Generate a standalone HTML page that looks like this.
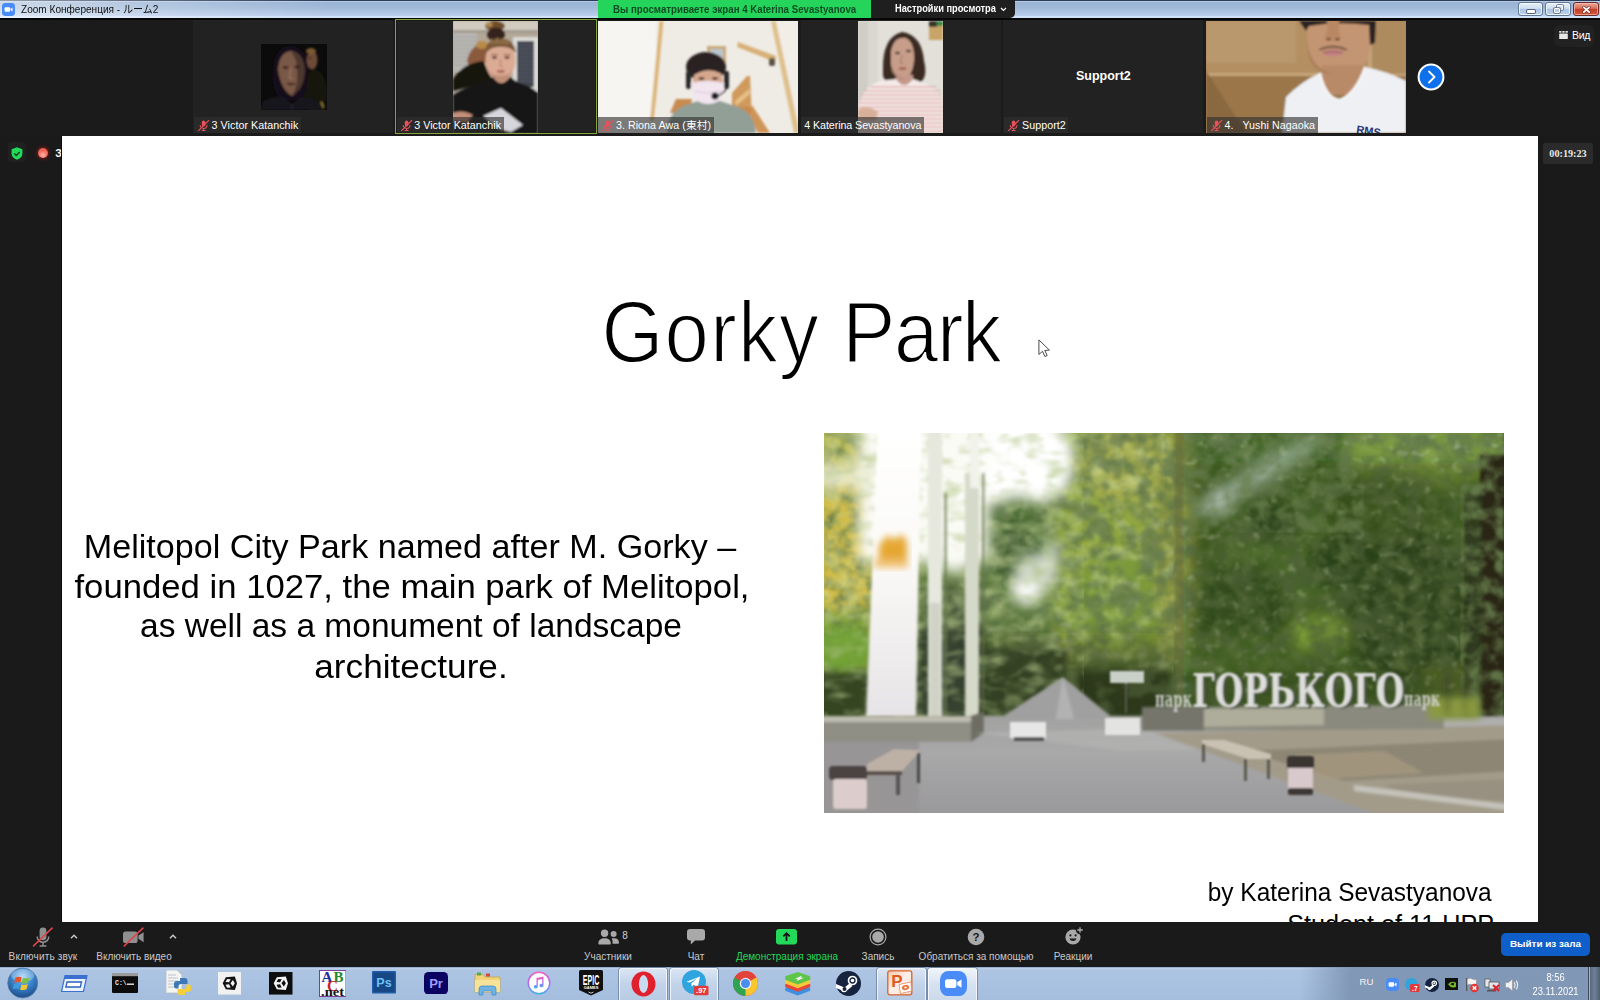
<!DOCTYPE html>
<html lang="ru">
<head>
<meta charset="utf-8">
<title>Zoom Конференция - ルーム2</title>
<style>
*{box-sizing:border-box;margin:0;padding:0}
html,body{width:1600px;height:1000px;overflow:hidden;background:#1a1a1a;font-family:"Liberation Sans","Noto Sans CJK JP",sans-serif;color:#fff}
.abs{position:absolute}
#titlebar{position:absolute;left:0;top:0;width:1600px;height:18px;background:linear-gradient(90deg,rgba(255,255,255,.5) 0,rgba(255,255,255,.28) 120px,rgba(255,255,255,0) 330px),linear-gradient(#2b3d59 0,#2b3d59 1px,#b7c9e3 1px,#b7c9e3 2px,#9ab4d4 2.500px,#a1bad9 8px,#aec4e2 12px,#b9ceec 15.500px,#d0e2f7 16px,#d0e2f7 17.600px,#0a0a0a 17.600px)}
#titlebar .ttl{position:absolute;left:21px;top:2px;font-size:10.6px;line-height:14px;color:#111;white-space:nowrap;transform:scaleX(.95);transform-origin:0 50%}
#strip{position:absolute;left:0;top:18px;width:1600px;height:118px;background:linear-gradient(#070707 0,#070707 1.600px,#1b1b1b 2px)}
.tile{position:absolute;top:2px;width:200px;height:113px;background:#222;overflow:hidden}
.lbl{position:absolute;left:1px;bottom:0;height:16px;background:rgba(46,46,46,.62);color:#fff;font-size:10.7px;line-height:16px;padding:0 2.600px 0 17.600px;letter-spacing:.05px;white-space:nowrap}
.lbl.nomic{padding-left:3.5px}
#slide{position:absolute;left:62px;top:136px;width:1476px;height:786px;background:#fff;overflow:hidden;color:#000}
#zbar{position:absolute;left:0;top:922px;width:1600px;height:45px;background:#1a1a1a}
.zl{position:absolute;top:27.700px;font-size:10.4px;line-height:13px;color:#c9c9c9;white-space:nowrap;transform:translateX(-50%) scaleX(.962)}
#taskbar{position:absolute;left:0;top:967px;width:1600px;height:33px;background:linear-gradient(#6f8db4 0,#c0d2ea 1px,#adc5e3 3px,#a9c1e0 60%,#a5bedd 100%)}

.t-title{position:absolute;left:349px;top:146px;width:780px;text-align:center;font-family:"Liberation Sans",sans-serif;font-size:86.200px;line-height:100px;white-space:nowrap;color:#000;-webkit-text-stroke:1.850px #fff;transform:scaleX(.925);transform-origin:50% 50%}
.bl{position:absolute;left:-52px;width:800px;text-align:center;font-size:32.5px;line-height:40px;white-space:nowrap;color:#000;transform-origin:50% 50%;transform:scaleX(1.05)}
.fl{position:absolute;right:46px;text-align:right;font-size:25.2px;line-height:34px;white-space:nowrap;color:#000;transform-origin:100% 50%;transform:scaleX(.97)}

.tile.act{border:1px solid #86a63c;box-shadow:inset 0 0 0 1px #1a1a1a;background:#222}
.lbl .mic{position:absolute;left:3px;top:1.5px}

#taskbar{overflow:hidden}
#taskbar::before{content:"";position:absolute;left:1300px;top:0;width:300px;height:33px;background:linear-gradient(90deg,rgba(124,147,178,0) 0,rgba(124,147,178,.9) 50px,rgba(126,149,180,.95) 100%)}
.tbtn{position:absolute;top:.600px;height:34px;border:1px solid rgba(255,255,255,.75);border-radius:3px;background:linear-gradient(rgba(255,255,255,.55),rgba(255,255,255,.3) 45%,rgba(255,255,255,.2));box-shadow:0 0 0 1px rgba(70,90,120,.5)}
.tbtn.on{background:linear-gradient(rgba(255,255,255,.8),rgba(255,255,255,.55) 45%,rgba(255,255,255,.42))}

.wb{position:absolute;top:2.200px;height:13.400px;border:1px solid #5f7696;border-radius:3px;background:linear-gradient(#e6eef9 0,#cfdff2 45%,#aac4e4 50%,#b9d0ea 100%);box-shadow:inset 0 0 0 1px rgba(255,255,255,.75)}
.wb i{position:absolute;display:block}
.wb.cl{border-color:#6a2a28;background:linear-gradient(#eaa898 0,#d9705c 45%,#c43c26 50%,#d05a3c 100%);box-shadow:inset 0 0 0 1px rgba(255,200,190,.6)}
</style>
</head>
<body>
<div id="titlebar"><span class="ttl">Zoom Конференция - ルーム2</span>
<svg class="abs" style="left:2px;top:3px" width="13" height="13" viewBox="0 0 13 13"><rect width="13" height="13" rx="3.400" fill="#4a8cf7"/><rect x="2.600" y="4.300" width="5.400" height="4.400" rx="1" fill="#fff"/><path d="M8.400 5.900l2.100-1.400v4l-2.100-1.400z" fill="#fff"/></svg>
<div class="wb" style="left:1517.500px;width:25.500px"><i style="left:8.500px;top:6.500px;width:8px;height:3px;border-radius:1px;background:#fff;box-shadow:0 0 0 1px #56627a"></i></div>
<div class="wb" style="left:1545.300px;width:25.300px"><i style="left:10.500px;top:2.200px;width:6px;height:5px;border:1.400px solid #fff;border-radius:1px;box-shadow:0 0 0 .8px #56627a"></i><i style="left:7.800px;top:4.600px;width:6px;height:5px;border:1.400px solid #fff;border-radius:1px;background:#b9cde6;box-shadow:0 0 0 .8px #56627a"></i></div>
<div class="wb cl" style="left:1572.500px;width:26px"><svg class="abs" style="left:8.300px;top:2.400px" width="9" height="8" viewBox="0 0 9 8"><path d="M1.800 1.400l5.400 4.800M7.200 1.400l-5.400 4.800" stroke="#7a3a30" stroke-width="3" stroke-linecap="round"/><path d="M1.800 1.400l5.400 4.800M7.200 1.400l-5.400 4.800" stroke="#fff" stroke-width="1.700" stroke-linecap="round"/></svg></div>
<div class="abs" style="left:598.300px;top:0;width:272.700px;height:18px;background:#25d45b"><span class="abs" style="left:15px;top:2.500px;font-size:10.300px;font-weight:bold;line-height:14px;color:#0d4d24;white-space:nowrap;transform-origin:0 50%;transform:scaleX(.94)" id="gb">Вы просматриваете экран 4 Katerina Sevastyanova</span></div>
<div class="abs" style="left:871px;top:0;width:144px;height:18px;background:#1f1f1f;border-radius:0 0 5px 0"><span class="abs" style="left:24px;top:2px;font-size:10.300px;font-weight:bold;line-height:14px;color:#fff;white-space:nowrap;transform-origin:0 50%;transform:scaleX(.9)" id="np">Настройки просмотра</span><svg class="abs" style="left:129px;top:7px" width="7" height="5" viewBox="0 0 7 5"><path d="M1 1l2.500 2.500l2.500-2.500" fill="none" stroke="#fff" stroke-width="1.200"/></svg></div>
</div>
<div id="strip">
<svg width="0" height="0" style="position:absolute"><defs>
<filter id="tb1" x="-5%" y="-5%" width="110%" height="110%"><feGaussianBlur stdDeviation="0.9"/></filter>
<filter id="tb2" x="-5%" y="-5%" width="110%" height="110%"><feGaussianBlur stdDeviation="2"/></filter>
<symbol id="mute" viewBox="0 0 14 14"><rect x="5.200" y="1.600" width="3.800" height="6.600" rx="1.900" fill="#e8525a"/><path d="M3.400 6.500a3.700 3.700 0 0 0 7.400 0M7.100 10.200v2M5 12.400h4.200" fill="none" stroke="#e8525a" stroke-width="1.100"/><path d="M1.400 12.800L13 1.200" stroke="#e8525a" stroke-width="1.300"/></symbol>
</defs></svg>

<div class="tile" style="left:193px">
<svg class="abs" style="left:67.5px;top:24px" width="66" height="66" viewBox="0 0 66 66"><rect width="66" height="66" fill="#0b0b0b"/><g filter="url(#tb1)"><ellipse cx="51" cy="16" rx="5.500" ry="9.500" fill="#6e4c38"/><ellipse cx="50" cy="7" rx="5" ry="3" fill="#7a5a30"/><ellipse cx="49.500" cy="14" rx="1.300" ry=".8" fill="#2a1a14"/><ellipse cx="54" cy="48" rx="12" ry="22" fill="#15140f"/><path d="M12 30 Q12 2 30 2 Q47 3 47 30 Q48 46 40 56 L20 56 Q11 46 12 30z" fill="#14111a"/><path d="M17 26 Q18 8 30 7 Q43 9 43.500 27 Q43 44 31 52 Q20 46 17 26z" fill="#7a5846"/><path d="M30 8 Q43 9 43.500 27 Q43 44 31 52 Q38 40 36 26 Q36 14 30 8z" fill="#4e382e"/><ellipse cx="24.500" cy="23.500" rx="3" ry="1.300" fill="#2a1a16"/><ellipse cx="36" cy="23" rx="2.800" ry="1.300" fill="#20140f"/><path d="M30 24 L28.500 34 L32 35" stroke="#9a7260" stroke-width="1.400" fill="none"/><ellipse cx="30" cy="40" rx="4.500" ry="1.200" fill="#4a2e28"/><path d="M0 66 L2 58 Q14 50 24 54 L31 60 L40 53 Q56 52 62 66z" fill="#17171b"/><path d="M31 60v6" stroke="#33333a" stroke-width="1"/><path d="M60 58l3 6" stroke="#b89a3a" stroke-width="1.200"/></g></svg>
<div class="lbl"><svg class="mic" width="13" height="13"><use href="#mute"/></svg>3 Victor Katanchik</div>
</div>

<div class="tile act" style="left:395px;width:202px;top:1px;height:115px">
<svg class="abs" style="left:57px;top:1px" width="85" height="113" viewBox="0 0 85 113"><rect width="85" height="113" fill="#b3a898"/><g filter="url(#tb1)">
<rect width="85" height="9" fill="#d2ccc0"/><rect y="9" width="85" height="3" fill="#a39a8c"/>
<rect x="0" y="12" width="24" height="38" fill="#b9b8b5"/><path d="M0 16h24M0 20h24M0 24h24M0 28h24M0 32h24M0 36h24M0 40h24M0 44h24" stroke="#9a9996" stroke-width=".8"/>
<rect x="60" y="16" width="25" height="54" fill="#dcdbd8"/><rect x="64" y="20" width="17" height="46" fill="#41454f"/><path d="M64 24h17M64 28h17M64 32h17M64 36h17M64 40h17M64 44h17M64 48h17M64 52h17M64 56h17M64 60h17" stroke="#6a6e78" stroke-width=".7"/>
<ellipse cx="42" cy="5" rx="10" ry="5" fill="#6f4e2c"/><ellipse cx="36" cy="3.500" rx="3.500" ry="2.500" fill="#b08a50"/><ellipse cx="43" cy="13.500" rx="9" ry="7" fill="#35241c"/>
<path d="M14 40 Q18 22 34 22 L38 34 Q30 48 18 50z" fill="#8b5a3c"/><ellipse cx="29" cy="24" rx="6" ry="4" fill="#b88a48"/>
<path d="M0 70 L0 58 Q10 42 30 40 L40 60z" fill="#15120f"/>
<ellipse cx="47.5" cy="39" rx="15" ry="21" fill="#dcab94"/>
<path d="M32 33 Q32 18 47 17.500 Q62 18 63 32 Q57 25 47 26 Q38 25 32 33z" fill="#7a5a3a"/><path d="M36 22l3-5l2 4l3-5l3 5l3-4l2 4l3-3l1 5z" fill="#8f6e48"/>
<rect x="40" y="54" width="16" height="12" fill="#c99780"/><ellipse cx="41.500" cy="36.500" rx="2.700" ry="1.200" fill="#4a3228"/><ellipse cx="54" cy="36.500" rx="2.700" ry="1.200" fill="#4a3228"/><path d="M38 33.500h7M50.500 33.500h7" stroke="#7a5a40" stroke-width="1.200"/><path d="M47.500 38v7l2.500 .800" stroke="#b88672" stroke-width="1.300" fill="none"/><ellipse cx="47.800" cy="50.500" rx="4.200" ry="1.400" fill="#a8625a"/><path d="M36 48 Q40 60 47.500 60 Q55 60 59 48 Q54 56 47.500 56.500 Q41 56 36 48z" fill="#b98872" opacity=".7"/>
<path d="M0 113 L0 74 Q12 66 28 62 L40 56 Q48 68 57 56 L66 62 Q80 66 85 72 L85 113z" fill="#151515"/>
<path d="M0 92 Q10 88 20 94 L14 101 L0 100z" fill="#c48f78"/>
<polygon points="30,95 48,87 70,104 58,111 46,108" fill="#d6d6dc"/>
</g></svg>
<div class="lbl" style="left:.600px;bottom:0"><svg class="mic" width="13" height="13"><use href="#mute"/></svg>3 Victor Katanchik</div>
</div>

<div class="tile" style="left:598.3px;width:199.7px;top:3px;height:112px">
<svg class="abs" style="left:0;top:0" width="200" height="112" viewBox="0 0 200 112"><rect width="200" height="112" fill="#efece6"/><g filter="url(#tb1)">
<rect width="58" height="112" fill="#f6f5f2"/>
<polygon points="61.500,0 65.500,0 56,100 52,100" fill="#dcb578"/>
<polygon points="173,0 178,0 200,104 200,112 196,112" fill="#dfc08c"/>
<polygon points="178,0 200,0 200,100" fill="#f1eee8"/>
<rect x="109" y="25" width="19" height="24" fill="#c9aa7c"/><rect x="112" y="28" width="13" height="21" fill="#bcc4cc"/>
<polygon points="140,21 178,35 177,41 139,26" fill="#d8b078"/><rect x="171" y="37" width="6" height="8" rx="2" fill="#5a5244"/>
<polygon points="134,100 134,72 149,55 152,55 154,100" fill="#cf9a5c"/><polygon points="137,80 151,68 152,73 138,85" fill="#e6c088"/><polygon points="134,86 154,86 154,100 134,100" fill="#c98a4c"/>
<polygon points="154,84 172,112 160,112 152,96" fill="#cf9458"/>
<polygon points="72,92 78,78 94,78 92,92" fill="#c98a50"/>
<path d="M69 112 Q70 90 88 84 L100 80 L122 80 L140 86 Q156 92 158 112z" fill="#929f97"/>
<ellipse cx="108" cy="46" rx="20" ry="15" fill="#2a2423"/>
<ellipse cx="110" cy="60" rx="15" ry="14" fill="#d6a78e"/>
<path d="M92 52 Q94 40 110 42 Q126 42 128 52 L122 52 Q110 46 98 53z" fill="#2a2423"/>
<rect x="88" y="50" width="5" height="18" rx="2" fill="#2b2b2b"/><rect x="126" y="50" width="5" height="18" rx="2" fill="#2b2b2b"/>
<ellipse cx="103.500" cy="57.500" rx="3" ry="1.200" fill="#3a2824"/><ellipse cx="117" cy="57.500" rx="3" ry="1.200" fill="#3a2824"/><path d="M93 62 Q110 58 126 62 L124 78 Q110 88 96 78z" fill="#f1e5ee"/><path d="M97 70 Q110 74 123 70" stroke="#d9c8d6" stroke-width="1" fill="none"/>
<path d="M129 64 Q128 72 119 75" stroke="#2b2b2b" stroke-width="1.5" fill="none"/><circle cx="117" cy="75" r="3.6" fill="#1d1d1d"/>
</g></svg>
<div class="lbl" style="left:0"><svg class="mic" width="13" height="13"><use href="#mute"/></svg>3. Riona Awa (東村)</div>
</div>

<div class="tile" style="left:800.8px">
<svg class="abs" style="left:57.4px;top:1px" width="84.5" height="112" viewBox="0 0 84.5 112"><rect width="85" height="112" fill="#e2e0d9"/><g filter="url(#tb1)">
<rect width="14" height="112" fill="#cfcdc6"/><rect x="10" width="10" height="112" fill="#d9d7d0"/>
<rect x="71" y="0" width="14" height="19" fill="#c8a468"/><rect x="71" y="0" width="8" height="6" fill="#34342a"/><rect x="79" y="0" width="6" height="5" fill="#3e8a4a"/>
<path d="M25 50 Q24 16 44 11 Q64 14 66 40 Q70 56 62 62 L30 62 Q24 58 25 50z" fill="#3a2a23"/>
<path d="M33 30 Q36 15 48 17 Q57 22 56 40 Q54 56 46 59 Q36 58 33 44z" fill="#c79e8a"/>
<rect x="38" y="54" width="17" height="12" fill="#c4998a"/><ellipse cx="39.500" cy="32" rx="2.600" ry="1.300" fill="#4a3028"/><ellipse cx="50.500" cy="30" rx="2.600" ry="1.300" fill="#4a3028"/><path d="M44 34 l-1.500 8 l3.500 .5" stroke="#a87c6a" stroke-width="1.200" fill="none"/><ellipse cx="44.500" cy="47.500" rx="4" ry="1.500" fill="#a0605a"/><path d="M34 46 Q40 58 47 58 Q40 60 33 50z" fill="#a8806e" opacity=".6"/>
<path d="M0 112 L0 86 Q4 66 22 60 L38 58 Q46 70 55 58 L66 62 Q82 68 85 82 L85 112z" fill="#f4ebe8"/>
<g stroke="#d58c8c" stroke-width="1.200" opacity=".95"><path d="M12 66h66M6 70h76M3 74h80M2 78h82M1 82h83M0 86h85M0 90h85M0 94h85M0 98h85M0 102h85M0 106h85M0 110h85"/></g>
<path d="M0 88 Q10 84 20 90 L18 100 L0 100z" fill="#d8b09a"/>
</g></svg>
<div class="lbl nomic" style="left:0;letter-spacing:-.08px">4 Katerina Sevastyanova</div>
</div>

<div class="tile" style="left:1003.4px">
<div class="abs" style="left:0;top:48px;width:200px;text-align:center;font-weight:bold;font-size:12.5px;line-height:16px;color:#fff">Support2</div>
<div class="lbl"><svg class="mic" width="13" height="13"><use href="#mute"/></svg>Support2</div>
</div>

<div class="tile" style="left:1206px;top:3px;height:112px">
<svg class="abs" style="left:0;top:0" width="200" height="112" viewBox="0 0 200 112"><rect width="200" height="112" fill="#a8855a"/><g filter="url(#tb1)">
<rect width="200" height="53" fill="#b38f62"/><rect width="90" height="42" fill="#bc9a70" opacity=".8"/>
<rect y="52" width="200" height="3" fill="#c6a679"/><rect y="55" width="200" height="57" fill="#9a764a"/>
<polygon points="0,50 40,112 0,112" fill="#8a6840"/>
<rect x="162" y="0" width="4" height="60" fill="#c4a47a"/><rect x="166" y="0" width="34" height="53" fill="#ae8a5e"/>
<path d="M99 0 L164 0 L164 30 Q160 50 140 53 L128 53 Q108 50 103 28z" fill="#c49572"/>
<rect x="116" y="44" width="44" height="30" fill="#b98a68"/>
<path d="M93 0 L170 0 L169 22 L164 24 L163 4 Q130 0 103 5 L100 10z" fill="#2a2120"/>
<path d="M121 0 Q122 12 118.500 17.500 Q127 22 135.500 17.500 Q132 12 133 0z" fill="#b98864"/><ellipse cx="122.500" cy="18.300" rx="2.200" ry="1.200" fill="#6a4030"/><ellipse cx="131.500" cy="18.300" rx="2.200" ry="1.200" fill="#6a4030"/><path d="M114 27 Q127 21.500 140 27 L139 29.500 Q127 25 115 29.500z" fill="#8a6450" opacity=".8"/><ellipse cx="127" cy="32" rx="10" ry="3.600" fill="#c28484"/><path d="M117 31.500 Q127 30 137 31.500" stroke="#8a4a4a" stroke-width=".9" fill="none"/><path d="M101 22 Q106 48 128 53 Q110 54 103 38z" fill="#a87a58" opacity=".55"/><path d="M113 29 Q127 22 141 29" stroke="#7a5848" stroke-width="1.5" fill="none"/>
<path d="M76 112 L80 76 Q96 60 114 52 Q120 78 134 79 Q150 72 159 46 Q180 50 200 60 L200 112z" fill="#eef0f4"/>
<path d="M114 52 Q120 78 134 79 Q150 72 159 46" stroke="#fafafa" stroke-width="2" fill="none"/>
</g>
<text x="150" y="112" font-family="'Liberation Sans',sans-serif" font-weight="bold" font-size="11" fill="#2a3478" transform="rotate(8 150 112)">RMS</text>
</svg>
<div class="lbl"><svg class="mic" width="13" height="13"><use href="#mute"/></svg>4.&nbsp;&nbsp; Yushi Nagaoka</div>
</div>

<svg class="abs" style="left:1415.6px;top:43.6px" width="30" height="30" viewBox="0 0 30 30"><circle cx="15" cy="15" r="13.4" fill="#fff"/><circle cx="15" cy="15" r="11.4" fill="#0e71eb"/><path d="M13 9.5L18.5 15L13 20.5" fill="none" stroke="#fff" stroke-width="1.8" stroke-linecap="round" stroke-linejoin="round"/></svg>

<div class="abs" style="left:1554px;top:7px;width:40px;height:22px;border-radius:6px;background:#222"></div>
<svg class="abs" style="left:1558.800px;top:12.600px" width="9" height="8.600" viewBox="0 0 10 10" fill="#e8e8e8"><rect x="0" y="0" width="2.6" height="2"/><rect x="3.7" y="0" width="2.6" height="2"/><rect x="7.4" y="0" width="2.6" height="2"/><rect x="0" y="3" width="10" height="6.5" rx=".8"/></svg>
<div class="abs" style="left:1572px;top:10px;font-size:10.5px;line-height:14px;color:#fff;letter-spacing:-.3px">Вид</div>
</div>

<div class="abs" style="left:7.500px;top:142px;width:18.500px;height:20px;border-radius:4px;background:#202020"></div>
<svg class="abs" style="left:11px;top:146.500px" width="12" height="13" viewBox="0 0 12 13"><path d="M6 .3l5.400 1.900v4.300c0 3.200-2.400 5.300-5.400 6.200c-3-.900-5.400-3-5.400-6.200v-4.300z" fill="#23d959"/><path d="M3.400 6.600l1.900 1.900l3.400-3.600" fill="none" stroke="#173d22" stroke-width="1.400"/></svg>
<div class="abs" style="left:38.200px;top:148px;width:9.800px;height:9.800px;border-radius:50%;background:radial-gradient(circle at 50% 70%,#ffb3a6 0,#f0665a 55%,#d94438 100%);box-shadow:0 0 3px 1.500px rgba(150,30,20,.55)"></div>
<div class="abs" style="left:55.300px;top:146px;font-size:10.500px;font-weight:bold;line-height:14px;color:#fff;white-space:nowrap">Запись</div>
<div class="abs" style="left:61px;top:136px;width:1px;height:786px;background:#0a0a0a"></div>
<div id="slide">
<div class="t-title" id="ttl"><span style="letter-spacing:1.300px">Gorky</span> <span style="letter-spacing:-1.500px">Park</span></div>
<div class="bl" id="b1" style="top:391px">Melitopol City Park named after M. Gorky –</div>
<div class="bl" id="b2" style="top:431px;left:-50px;transform:scaleX(1.0675)">founded in 1027, the main park of Melitopol,</div>
<div class="bl" id="b3" style="top:470px;left:-51px;transform:scaleX(1.031)">as well as a monument of landscape</div>
<div class="bl" id="b4" style="top:510.5px;left:-50.7px;transform:scaleX(1.081)">architecture.</div>
<div class="fl" id="f1" style="top:739px">by Katerina Sevastyanova</div>
<div class="fl" id="f2" style="top:771px;right:44px;transform:scaleX(1.0)">Student of 11 UPP</div>
<svg class="abs" style="left:975.700px;top:202.700px" width="13" height="19" viewBox="0 0 13 19"><path d="M.9.900v14.600l3.600-3.200l2.400 5.200l2.300-1l-2.400-5l4.600-.4z" fill="#fff" stroke="#4a4a4e" stroke-width="1" stroke-linejoin="round"/></svg>
<!--PHOTO-START--><svg class="photo" width="680" height="380" viewBox="0 0 680 380" style="position:absolute;left:762px;top:297px">
<defs>
<filter id="pb8" x="-10%" y="-10%" width="120%" height="120%"><feGaussianBlur stdDeviation="7"/></filter>
<filter id="pb4" x="-10%" y="-10%" width="120%" height="120%"><feGaussianBlur stdDeviation="3.5"/></filter>
<filter id="pb2" x="-10%" y="-10%" width="120%" height="120%"><feGaussianBlur stdDeviation="1.5"/></filter>
<filter id="pb1" x="-10%" y="-10%" width="120%" height="120%"><feGaussianBlur stdDeviation="0.8"/></filter>
<filter id="leafd" x="0" y="0" width="100%" height="100%"><feTurbulence type="fractalNoise" baseFrequency="0.07 0.08" numOctaves="3" seed="7"/><feColorMatrix type="matrix" values="0 0 0 0 0.13  0 0 0 0 0.2  0 0 0 0 0.07  2.2 1.6 0 0 -1.55"/><feGaussianBlur stdDeviation="1.1"/></filter>
<filter id="leafl" x="0" y="0" width="100%" height="100%"><feTurbulence type="fractalNoise" baseFrequency="0.06 0.07" numOctaves="3" seed="23"/><feColorMatrix type="matrix" values="0 0 0 0 0.76  0 0 0 0 0.84  0 0 0 0 0.42  0 1.9 1.7 0 -1.6"/><feGaussianBlur stdDeviation="1.2"/></filter>
<filter id="leafg" x="0" y="0" width="100%" height="100%"><feTurbulence type="fractalNoise" baseFrequency="0.05 0.09" numOctaves="2" seed="5"/><feColorMatrix type="matrix" values="0 0 0 0 0.45  0 0 0 0 0.56  0 0 0 0 0.25  1.8 1.8 0 0 -1.7"/><feGaussianBlur stdDeviation="1.3"/></filter>
<filter id="leafD2" x="0" y="0" width="100%" height="100%"><feTurbulence type="fractalNoise" baseFrequency="0.035 0.045" numOctaves="3" seed="41"/><feColorMatrix type="matrix" values="0 0 0 0 0.11  0 0 0 0 0.17  0 0 0 0 0.07  7 3 0 0 -5.15"/><feGaussianBlur stdDeviation="1.4"/></filter>
<filter id="leafH" x="0" y="0" width="100%" height="100%"><feTurbulence type="fractalNoise" baseFrequency="0.11 0.12" numOctaves="2" seed="77"/><feColorMatrix type="matrix" values="0 0 0 0 0.78  0 0 0 0 0.86  0 0 0 0 0.6  0 2.6 2.2 0 -2.72"/><feGaussianBlur stdDeviation="0.9"/></filter>
<clipPath id="pc"><rect width="680" height="380"/></clipPath>
<clipPath id="skyc"><rect x="0" y="0" width="260" height="285"/></clipPath>
<linearGradient id="road" x1="0" y1="0" x2="0" y2="1"><stop offset="0" stop-color="#a2a2a1"/><stop offset=".35" stop-color="#a8a8a9"/><stop offset="1" stop-color="#97979a"/></linearGradient>
<linearGradient id="ob" x1="0" y1="0" x2="0" y2="1"><stop offset="0" stop-color="#ffffff"/><stop offset=".45" stop-color="#fbfaf7"/><stop offset="1" stop-color="#e6e3e6"/></linearGradient>
</defs>
<g clip-path="url(#pc)">
<rect width="680" height="380" fill="#688540"/>
<!-- foliage masses -->
<g filter="url(#pb8)">
<rect x="-20" y="-20" width="80" height="230" fill="#bcbb56"/>
<rect x="-20" y="50" width="70" height="125" fill="#d2bd48"/>
<rect x="-20" y="175" width="70" height="75" fill="#7f9f3a"/>
<rect x="-20" y="238" width="120" height="55" fill="#3c4a2a"/>
<rect x="95" y="150" width="70" height="140" fill="#4f5f40"/>
<ellipse cx="193" cy="112" rx="36" ry="52" fill="#4f7038"/>
<ellipse cx="192" cy="120" rx="22" ry="30" fill="#38522a"/>
<rect x="160" y="170" width="90" height="120" fill="#5c783c"/>
<rect x="232" y="-20" width="125" height="260" fill="#90a640"/>
<ellipse cx="300" cy="30" rx="50" ry="40" fill="#a4ac50"/>
<ellipse cx="300" cy="180" rx="60" ry="60" fill="#7c9a3a"/>
<rect x="235" y="222" width="115" height="62" fill="#4c6234"/>
<rect x="345" y="-20" width="350" height="300" fill="#44662c"/>
<ellipse cx="350" cy="110" rx="20" ry="120" fill="#8d973f"/>
<ellipse cx="470" cy="120" rx="70" ry="50" fill="#567a34"/>
<ellipse cx="600" cy="20" rx="80" ry="35" fill="#7a9a40"/>
<ellipse cx="560" cy="80" rx="60" ry="40" fill="#3f5c28"/>
<ellipse cx="590" cy="180" rx="70" ry="80" fill="#314a25"/>
<ellipse cx="420" cy="180" rx="50" ry="50" fill="#385528"/><ellipse cx="520" cy="130" rx="40" ry="30" fill="#2f4a22"/><ellipse cx="450" cy="90" rx="30" ry="20" fill="#34502a"/>
<ellipse cx="495" cy="200" rx="30" ry="18" fill="#94bd44"/>
<ellipse cx="420" cy="225" rx="60" ry="25" fill="#4f722e"/>
<rect x="600" y="240" width="70" height="40" fill="#8c9c40"/>
</g>
<rect width="680" height="290" filter="url(#leafd)" opacity=".85"/>
<rect width="350" height="290" filter="url(#leafl)" opacity=".4"/><rect x="350" width="330" height="290" filter="url(#leafl)" opacity=".12"/>
<g filter="url(#pb4)">
<rect x="-10" y="240" width="52" height="46" fill="#364424"/>
<rect x="94" y="195" width="66" height="92" fill="#2f3a28" opacity=".85"/>
<rect x="158" y="215" width="85" height="72" fill="#2c3b25" opacity=".8"/>
<rect x="252" y="238" width="95" height="48" fill="#28371f" opacity=".9"/>
<ellipse cx="20" cy="215" rx="30" ry="22" fill="#6fa232" opacity=".8"/>
<rect x="345" y="240" width="300" height="40" fill="#3b5528" opacity=".6"/>
</g>
<rect x="150" width="530" height="290" filter="url(#leafD2)" opacity=".6"/>
<rect x="350" width="330" height="260" filter="url(#leafH)" opacity=".4"/>
<g filter="url(#pb8)"><rect x="365" y="30" width="300" height="250" fill="#1c2a10" opacity=".28"/><rect x="150" y="200" width="200" height="85" fill="#1c2a10" opacity=".2"/></g>
<!-- sky -->
<g filter="url(#pb8)">
<ellipse cx="150" cy="20" rx="100" ry="50" fill="#ffffff"/><ellipse cx="215" cy="35" rx="34" ry="34" fill="#ffffff"/><ellipse cx="130" cy="90" rx="34" ry="50" fill="#f6f7f0"/>
<rect x="35" y="-20" width="130" height="150" fill="#fbfbf6"/>
<rect x="-20" y="30" width="70" height="26" fill="#f1f1dc" opacity=".8"/>
<ellipse cx="212" cy="140" rx="22" ry="20" fill="#e3eae0" opacity=".8"/>
<ellipse cx="202" cy="158" rx="15" ry="13" fill="#ffffff"/>
<ellipse cx="228" cy="120" rx="8" ry="16" fill="#e8eee6" opacity=".7"/>
<ellipse cx="432" cy="44" rx="76" ry="11" fill="#b9cbc2" opacity=".62" transform="rotate(-31 432 44)"/>
<ellipse cx="395" cy="70" rx="14" ry="14" fill="#c3d0cc" opacity=".7"/>
</g>
<g clip-path="url(#skyc)"><rect width="680" height="290" filter="url(#leafg)" opacity=".6"/></g>
<g opacity=".7"><rect x="340" width="200" height="100" filter="url(#leafd)"/></g>
<!-- trunks & obelisk -->
<g filter="url(#pb2)">
<polygon points="54,-5 97,-5 92,284 42,284" fill="url(#ob)"/>
<rect x="104" y="-5" width="14" height="290" fill="#e6e8de"/>
<rect x="106" y="170" width="10" height="115" fill="#cfd2c4"/>
<rect x="141" y="40" width="14" height="245" fill="#d5d9c9"/>
<rect x="146" y="-5" width="9" height="60" fill="#f1f3ea"/>
<rect x="120" y="60" width="3" height="225" fill="#6f7d52" opacity=".7"/>
<rect x="158" y="40" width="2.500" height="245" fill="#64724a" opacity=".7"/>

<rect x="351" y="-5" width="8" height="290" fill="#66683a" opacity=".5"/>
<rect x="656" y="22" width="30" height="310" fill="#2b2719"/><rect x="640" y="60" width="20" height="230" fill="#2a2e1a" opacity=".7"/>
<polygon points="646,330 690,330 690,316 660,298" fill="#2f2a1c"/>
</g>
<rect x="636" y="20" width="44" height="270" filter="url(#leafd)" opacity=".9"/>
<g filter="url(#pb4)"><path d="M55 112 l9 -10 l7 5 l6 -6 l6 7 v22 h-28z" fill="#e5a730"/><rect x="50" y="126" width="34" height="9" fill="#efc070" opacity=".9"/></g>
<!-- ground -->
<g filter="url(#pb2)">
<rect x="-5" y="283" width="690" height="105" fill="url(#road)"/>
<polygon points="239,244 175,286 290,286" fill="#a0a0a0"/>
<polygon points="239,244 232,286 250,286" fill="#b2b2b2"/>
<rect x="-5" y="283" width="152" height="26" fill="#8f8f86"/>
<rect x="-5" y="283" width="152" height="6" fill="#bfbdb0"/>
<polygon points="147,283 160,279 160,300 147,309" fill="#6d6d64"/>
<rect x="-5" y="309" width="100" height="75" fill="#979595"/>
<polygon points="150,300 690,285 690,312 300,318" fill="#b3b3b2" opacity=".7"/>
<polygon points="330,300 690,292 690,384 560,384" fill="#a39b8a"/>
<polygon points="420,318 690,306 690,338 520,348" fill="#7f7868" opacity=".6"/><polygon points="470,322 560,318 600,340 500,346" fill="#a89a80" opacity=".7"/><polygon points="560,352 690,346 690,368 600,366" fill="#8d8676" opacity=".5"/>
<polygon points="318,274 620,272 620,296 318,298" fill="#8a8a7e"/>
<polygon points="380,276 500,275 500,292 380,294" fill="#aeac9a"/>
<rect x="318" y="274" width="62" height="24" fill="#74746c"/>
<polygon points="530,352 690,372 690,378 530,358" fill="#c4c2ba"/>
</g>
<g filter="url(#pb4)"><rect x="604" y="264" width="52" height="22" fill="#8a9a40"/><rect x="622" y="240" width="3" height="40" fill="#3a3a28"/><rect x="640" y="245" width="2" height="35" fill="#3a3a28"/></g>
<g filter="url(#pb1)">
<rect x="186" y="289" width="36" height="16" fill="#e6e6e6"/>
<rect x="190" y="304" width="30" height="4" fill="#555"/>
<rect x="281" y="285" width="35" height="17" fill="#e3e3e1"/>
<rect x="286" y="238" width="34" height="12" fill="#c9d0c8"/>
<rect x="301" y="250" width="2" height="30" fill="#555a50"/>
<polygon points="43,331 70,316 97,317 78,338 43,338" fill="#bdb1a6"/>
<polygon points="43,338 78,338 78,342 43,342" fill="#5a5048"/>
<rect x="93" y="320" width="3" height="30" fill="#4a4a48"/>
<rect x="72" y="340" width="4" height="22" fill="#555"/>
<rect x="5" y="333" width="38" height="14" rx="4" fill="#4c4242"/>
<rect x="9" y="346" width="34" height="30" rx="3" fill="#dccccc"/>
<polygon points="378,307 400,307 447,321 447,326 424,326 378,311" fill="#c9c1b2"/>
<rect x="378" y="311" width="3" height="18" fill="#5a5a50"/>
<rect x="420" y="326" width="3" height="22" fill="#5a5a50"/>
<rect x="443" y="326" width="3" height="20" fill="#5a5a50"/>
<rect x="463" y="323" width="27" height="13" rx="3" fill="#3a3632"/>
<rect x="464" y="335" width="25" height="22" fill="#d8c9cc"/>
<rect x="464" y="355" width="25" height="7" rx="2" fill="#3c3834"/>
</g>
<g filter="url(#pb1)" font-family="'DejaVu Serif','Liberation Serif',serif" font-weight="bold">
<text x="368" y="274" font-size="46" textLength="212" lengthAdjust="spacingAndGlyphs" fill="#4c5248" transform="translate(2.500,1)">ГОРЬКОГО</text>
<text x="368" y="274" font-size="46" textLength="212" lengthAdjust="spacingAndGlyphs" fill="#dededc">ГОРЬКОГО</text>
<text x="331" y="274" font-size="22" textLength="37" lengthAdjust="spacingAndGlyphs" fill="#d2d2d0">парк</text>
<text x="580" y="273" font-size="20" textLength="36" lengthAdjust="spacingAndGlyphs" fill="#d2d2d0">парк</text>
</g>
</g>
</svg>
<!--PHOTO-END-->
</div>
<div class="abs" style="left:1542.700px;top:142.500px;width:50.700px;height:21.500px;border-radius:2px;background:#2b2b2b;color:#e8e8e8;font-family:'Liberation Serif',serif;font-weight:bold;font-size:10.200px;line-height:21.500px;text-align:center;letter-spacing:0">00:19:23</div>
<div id="zbar">
<!-- mic -->
<svg class="abs" style="left:31px;top:3px" width="24" height="24" viewBox="0 0 24 24"><rect x="8.6" y="2.6" width="6.8" height="12.6" rx="3.4" fill="#8f8f8f"/><path d="M6.2 11.5a5.8 5.8 0 0 0 11.6 0M12 17.4v3.2M8.6 21h6.8" fill="none" stroke="#8f8f8f" stroke-width="1.5"/><path d="M2 21.4L21.6 2.6" stroke="#e0444a" stroke-width="1.5"/></svg>
<svg class="abs caret" style="left:70px;top:12px" width="8" height="5" viewBox="0 0 8 5"><path d="M1 4.2L4 1.2L7 4.2" fill="none" stroke="#cfcfcf" stroke-width="1.4"/></svg>
<div class="zl" style="left:43px;letter-spacing:.17px">Включить звук</div>
<!-- video -->
<svg class="abs" style="left:121px;top:3px" width="25" height="24" viewBox="0 0 25 24"><rect x="2" y="6.4" width="14.6" height="11.6" rx="2.6" fill="#8f8f8f"/><path d="M17.4 10.6L22.6 7.2v10l-5.2-3.4z" fill="#8f8f8f"/><path d="M2.8 21.4L22.4 2.6" stroke="#e0444a" stroke-width="1.5"/></svg>
<svg class="abs caret" style="left:168.6px;top:12px" width="8" height="5" viewBox="0 0 8 5"><path d="M1 4.2L4 1.2L7 4.2" fill="none" stroke="#cfcfcf" stroke-width="1.4"/></svg>
<div class="zl" style="left:133.6px">Включить видео</div>
<!-- participants -->
<svg class="abs" style="left:597.800px;top:7.300px" width="22" height="16" viewBox="0 0 22 16" fill="#a9a9a9"><circle cx="6.6" cy="4.2" r="3.7"/><path d="M0.4 14.6c0-4 2.6-5.4 6.2-5.4s6.2 1.4 6.2 5.4c0 .8-.4 1-1 1h-10.4c-.6 0-1-.2-1-1z"/><circle cx="15.6" cy="5" r="3"/><path d="M13.6 9.6c.8-.3 1.4-.4 2.2-.4 3 0 5.2 1.2 5.200 4.600 0 .7-.3.900-.9.900h-5.600c.2-2 .2-3.600-.9-5.100z"/></svg>
<div class="abs" style="left:622.300px;top:8px;font-size:10px;line-height:12px;color:#cfcfcf">8</div>
<div class="zl" style="left:608.4px">Участники</div>
<!-- chat -->
<svg class="abs" style="left:687px;top:6.6px" width="18" height="16" viewBox="0 0 18 16"><path d="M3 0h12a3 3 0 0 1 3 3v5.600a3 3 0 0 1-3 3h-7l-4.200 3.800v-3.800h-.8a3 3 0 0 1-3-3v-5.600a3 3 0 0 1 3-3z" fill="#a9a9a9"/></svg>
<div class="zl" style="left:695.6px">Чат</div>
<!-- share -->
<svg class="abs" style="left:776px;top:7px" width="21" height="16" viewBox="0 0 21 16"><rect width="21" height="15.400" rx="3" fill="#23d959"/><path d="M10.500 12v-7.500M7.300 7.400l3.200-3.200l3.200 3.200" fill="none" stroke="#111" stroke-width="1.700"/></svg>
<div class="zl" style="left:787.2px;color:#23d959">Демонстрация экрана</div>
<!-- record -->
<svg class="abs" style="left:869.4px;top:5.750px" width="18" height="18" viewBox="0 0 18 18"><circle cx="9" cy="9" r="7.900" fill="none" stroke="#a9a9a9" stroke-width="1.200"/><circle cx="9" cy="9" r="5.800" fill="#a9a9a9"/></svg>
<div class="zl" style="left:878px">Запись</div>
<!-- help -->
<svg class="abs" style="left:967px;top:5.750px" width="18" height="18" viewBox="0 0 18 18"><circle cx="9" cy="9" r="8.300" fill="#a9a9a9"/><text x="9" y="13.200" text-anchor="middle" font-family="'Liberation Sans',sans-serif" font-weight="bold" font-size="11.500" fill="#1a1a1a">?</text></svg>
<div class="zl" style="left:975.7px">Обратиться за помощью</div>
<!-- reactions -->
<svg class="abs" style="left:1064px;top:3px" width="22" height="22" viewBox="0 0 22 22"><circle cx="9" cy="12" r="7.600" fill="#a9a9a9"/><circle cx="6.400" cy="10.400" r="1.100" fill="#1a1a1a"/><circle cx="11.600" cy="10.400" r="1.100" fill="#1a1a1a"/><path d="M5.400 13.400a3.800 3.800 0 0 0 7.200 0z" fill="#1a1a1a"/><circle cx="16" cy="5" r="4.200" fill="#1a1a1a"/><path d="M16 2.200v5.600M13.200 5h5.600" stroke="#a9a9a9" stroke-width="1.300"/></svg>
<div class="zl" style="left:1073.400px">Реакции</div>
<div class="abs" style="left:1501px;top:11.400px;width:89px;height:22.400px;border-radius:5px;background:#0e5fc9;color:#fff;font-weight:bold;font-size:9.900px;line-height:22px;text-align:center;white-space:nowrap">Выйти из зала</div>
</div>

<div id="taskbar">
<div class="tbtn" style="left:618.500px;width:48px"></div>
<div class="tbtn" style="left:669.700px;width:48px"></div>
<div class="tbtn" style="left:876.900px;width:48.700px"></div>
<div class="tbtn on" style="left:928px;width:48.800px"></div>
<!-- start orb -->
<svg class="abs" style="left:6px;top:0" width="34" height="33" viewBox="0 0 34 33"><defs><radialGradient id="orb" cx=".5" cy=".3" r=".75"><stop offset="0" stop-color="#9fd0f5"/><stop offset=".45" stop-color="#3b86cf"/><stop offset="1" stop-color="#17457f"/></radialGradient></defs><circle cx="16.700" cy="16" r="15" fill="url(#orb)" stroke="#5d7fa8" stroke-width=".8"/><ellipse cx="16.700" cy="8.500" rx="11.500" ry="6.500" fill="#fff" opacity=".28"/><path d="M9.500 10.600q3-1.600 6.200-.3l-1.300 5.200q-3.100-1.300-6.200.3z" fill="#e8542a"/><path d="M17 10.800q3.100 1.200 6.400-.4l-1.300 5.200q-3.300 1.600-6.400.4z" fill="#7cc142"/><path d="M7.900 17.200q3.100-1.600 6.200-.3l-1.300 5.200q-3.100-1.300-6.200.3z" fill="#3d9be0"/><path d="M15.400 17.400q3.100 1.200 6.400-.4l-1.300 5.200q-3.300 1.600-6.400.4z" fill="#f7c52f"/></svg>
<!-- run -->
<svg class="abs" style="left:61px;top:7px" width="27" height="19" viewBox="0 0 27 19"><polygon points="4,1.500 26,1.500 22.500,17.500 .5,17.500" fill="#e9f1fb" stroke="#3b6fd0" stroke-width="1.200"/><polygon points="4.200,1.500 26,1.500 25.200,5 3.400,5" fill="#3b6fd0"/><polygon points="6,8 20.500,8 19.300,13 4.900,13" fill="#fff" stroke="#2d5fc0" stroke-width="1.300"/></svg>
<!-- cmd -->
<svg class="abs" style="left:112px;top:6px" width="26" height="20" viewBox="0 0 26 20"><rect width="26" height="20" rx="1" fill="#0c0c0c"/><rect width="26" height="3.200" fill="#9a9a9a"/><text x="3" y="11.500" font-family="'Liberation Mono',monospace" font-weight="bold" font-size="6.500" fill="#e8e8e8">C:\</text><rect x="15" y="10.500" width="7" height="1.400" fill="#e8e8e8"/></svg>
<!-- python file -->
<svg class="abs" style="left:164px;top:3px" width="28" height="26" viewBox="0 0 28 26"><path d="M2 0h11l5 5v18h-16z" fill="#f4f4f2" stroke="#b9bcc2" stroke-width=".8"/><path d="M4 5h8M4 8h10M4 11h10M4 14h8M4 17h9" stroke="#b4bccb" stroke-width=".9"/><path d="M16 8h4.500a3 3 0 0 1 3 3v3h-6.500a2.500 2.500 0 0 0-2.500 2.500v2h-2a2.500 2.500 0 0 1-2.500-2.500v-2a3 3 0 0 1 3-3h3z" fill="#3d7ab5"/><path d="M21 26h-4.500a3 3 0 0 1-3-3v-3h6.500a2.500 2.500 0 0 0 2.500-2.500v-2h2a2.500 2.500 0 0 1 2.500 2.500v2a3 3 0 0 1-3 3h-3z" fill="#f4cf3c" transform="translate(0,-1)"/></svg>
<!-- unity white -->
<svg class="abs" style="left:217.600px;top:5px" width="23.500" height="22.600" viewBox="0 0 24 23"><rect width="24" height="23" fill="#f1f1f1"/><polygon points="4.800,11.500 8,5.400 17.200,4.600 19.400,11.500 17.200,18.400 8,17.600" fill="#111"/><polygon points="12.700,11.500 15.200,8.200 17.200,11.500 15.200,14.800" fill="#f1f1f1"/><polygon points="11.300,10.400 7.700,10.100 9.300,7 13,7.300" fill="#f1f1f1"/><polygon points="11.300,12.600 7.700,12.900 9.300,16 13,15.700" fill="#f1f1f1"/></svg>
<!-- unity black -->
<svg class="abs" style="left:269px;top:5px" width="23.500" height="22.600" viewBox="0 0 24 23"><rect width="24" height="23" fill="#0d0d0d"/><polygon points="4.800,11.500 8,5.400 17.200,4.600 19.400,11.500 17.200,18.400 8,17.600" fill="#f4f4f4"/><polygon points="12.700,11.500 15.200,8.200 17.200,11.500 15.200,14.800" fill="#0d0d0d"/><polygon points="11.300,10.400 7.700,10.100 9.300,7 13,7.300" fill="#0d0d0d"/><polygon points="11.300,12.600 7.700,12.900 9.300,16 13,15.700" fill="#0d0d0d"/></svg>
<!-- abc.net -->
<svg class="abs" style="left:318.700px;top:3px" width="27.500" height="27" viewBox="0 0 27.500 27"><rect x=".5" y=".5" width="26.500" height="26" fill="#fff" stroke="#7b3f98" stroke-width="1"/><g font-family="'Liberation Serif',serif" font-weight="bold"><text x="2.500" y="12.300" font-size="15" fill="#1d2fa0">A</text><text x="14.500" y="12.300" font-size="15" fill="#1f8a2e">B</text><text x="8" y="21" font-size="15" fill="#c8202a">C</text><text x="2" y="25.600" font-size="12.500" fill="#111" textLength="23" lengthAdjust="spacingAndGlyphs">.net</text></g></svg>
<!-- Ps -->
<svg class="abs" style="left:372px;top:4px" width="24" height="22.500" viewBox="0 0 24 22.500"><rect width="24" height="22.500" rx="1" fill="#1f5aa8"/><rect x="1.500" y="1.500" width="21" height="19.500" fill="#164886"/><text x="12" y="16" text-anchor="middle" font-family="'Liberation Sans',sans-serif" font-weight="bold" font-size="12.500" fill="#6dc0f5">Ps</text></svg>
<!-- Pr -->
<svg class="abs" style="left:424px;top:4.500px" width="24" height="22.500" viewBox="0 0 24 22.500"><rect width="24" height="22.500" rx="4.500" fill="#0b0362"/><text x="12" y="16.300" text-anchor="middle" font-family="'Liberation Sans',sans-serif" font-weight="bold" font-size="13" fill="#9b9cff">Pr</text></svg>
<!-- explorer -->
<svg class="abs" style="left:474px;top:4px" width="27" height="25" viewBox="0 0 27 25"><path d="M1 3.500h8l2 2.500h15v15h-25z" fill="#f1d37a" stroke="#c9a63f" stroke-width=".8"/><path d="M1 9h25v12h-25z" fill="#f7e29a"/><rect x="3" y="1.500" width="4" height="3" fill="#53a84a"/><rect x="12" y="2.500" width="4" height="3" fill="#d9483c"/><path d="M5 24v-6a3 3 0 0 1 3-3h11a3 3 0 0 1 3 3v6h-4v-4h-9v4z" fill="#6fb2e6" stroke="#3d86c4" stroke-width=".7"/></svg>
<!-- itunes -->
<svg class="abs" style="left:527px;top:4px" width="24" height="24" viewBox="0 0 24 24"><defs><linearGradient id="itg" x1="0" y1="0" x2="0" y2="1"><stop offset="0" stop-color="#f35fc0"/><stop offset=".5" stop-color="#b06af0"/><stop offset="1" stop-color="#40b5f2"/></linearGradient></defs><circle cx="12" cy="12" r="11.500" fill="url(#itg)"/><circle cx="12" cy="12" r="10" fill="#fff"/><path d="M9.500 7l7-1.600v9.200a2 1.700 0 1 1-1.300-1.600v-5l-4.400 1v6.800a2 1.700 0 1 1-1.300-1.600z" fill="url(#itg)"/></svg>
<!-- epic -->
<svg class="abs" style="left:579px;top:3px" width="24" height="26" viewBox="0 0 24 26"><path d="M1.500 0h21a1.500 1.500 0 0 1 1.500 1.500v18.500l-12 5.500l-12-5.500v-18.500a1.500 1.500 0 0 1 1.500-1.500z" fill="#111"/><text x="12" y="9.800" text-anchor="middle" font-family="'Liberation Sans',sans-serif" font-weight="bold" font-size="9" fill="#fff" textLength="16.500" lengthAdjust="spacingAndGlyphs" transform="scale(1,1.550)">EPIC</text><text x="12" y="19.400" text-anchor="middle" font-family="'Liberation Sans',sans-serif" font-weight="bold" font-size="4" fill="#fff">GAMES</text><path d="M9.500 22l2.500 1.200l2.500-1.200" fill="none" stroke="#fff" stroke-width=".8"/></svg>
<!-- opera -->
<svg class="abs" style="left:630.500px;top:3.500px" width="25" height="26" viewBox="0 0 25 26"><ellipse cx="12.500" cy="13" rx="12" ry="12.500" fill="#e0202c"/><ellipse cx="12.500" cy="13" rx="4.600" ry="9" fill="#c9dbef"/></svg>
<!-- telegram -->
<svg class="abs" style="left:682px;top:3px" width="28" height="28" viewBox="0 0 28 28"><circle cx="12" cy="12" r="12" fill="#2fa4de"/><path d="M4.500 11.800l13.500-5.300l-2.300 11.300l-4-3l-2 2l-.4-3.400l6-5.500l-7.400 4.600z" fill="#fff"/><rect x="12" y="15.800" width="14.500" height="9.400" rx="1.500" fill="#e23b3b"/><text x="19.300" y="23.300" text-anchor="middle" font-family="'Liberation Sans',sans-serif" font-weight="bold" font-size="7.500" fill="#fff">.97</text></svg>
<!-- chrome -->
<svg class="abs" style="left:733.300px;top:3.500px" width="25" height="25" viewBox="0 0 25 25"><circle cx="12.500" cy="12.500" r="12.500" fill="#e2433a"/><path d="M12.500 12.500L1.700 6.250A12.500 12.500 0 0 0 12.500 25z" fill="#2ea353"/><path d="M12.500 12.500L12.500 25A12.500 12.500 0 0 0 23.300 6.250z" fill="#f8c62f"/><path d="M12.500 12.500L1.700 6.250A12.500 12.500 0 0 1 23.300 6.250z" fill="#e2433a"/><circle cx="12.500" cy="12.500" r="5.700" fill="#f2f2f2"/><circle cx="12.500" cy="12.500" r="4.500" fill="#4a8cf0"/></svg>
<!-- bluestacks -->
<svg class="abs" style="left:783.200px;top:3.600px" width="29.500" height="26" viewBox="0 0 28 25"><path d="M2 16l12-3.500l12 3.500v3l-12 4.500l-12-4.500z" fill="#3d8fdf"/><path d="M2 12.500l12-3.500l12 3.500v3l-12 4.500l-12-4.500z" fill="#e8473c"/><path d="M2 9l12-3.500l12 3.500v3l-12 4.500l-12-4.500z" fill="#f5c93a"/><path d="M2 5l12-4l12 4v3.500l-12 4.500l-12-4.500z" fill="#5ec44a"/><path d="M11 7.500l7-3l-1 2h3l-7 3.200l1-2.200z" fill="#fff" opacity=".9"/></svg>
<!-- steam -->
<svg class="abs" style="left:836.300px;top:3.500px" width="25" height="25" viewBox="0 0 25 25"><circle cx="12.500" cy="12.500" r="12.500" fill="#15233f"/><circle cx="16.500" cy="9.500" r="4" fill="none" stroke="#fff" stroke-width="1.700"/><circle cx="16.500" cy="9.500" r="1.800" fill="#fff"/><path d="M0 13l8.500 3.500l5-4l3 2.500l-5.500 4.500a3.200 3.200 0 0 1-6-.5l-5-2z" fill="#fff"/><circle cx="8.500" cy="18" r="2" fill="#15233f"/></svg>
<!-- powerpoint -->
<svg class="abs" style="left:886.600px;top:2.600px" width="26" height="26" viewBox="0 0 26 26"><defs><linearGradient id="ppg" x1="0" y1="0" x2="1" y2="1"><stop offset="0" stop-color="#f7c9ae"/><stop offset=".5" stop-color="#fdf1ea"/><stop offset="1" stop-color="#f9d9c6"/></linearGradient></defs><rect x=".8" y=".8" width="24" height="24" rx="2" fill="url(#ppg)" stroke="#d9622c" stroke-width="1.300"/><text x="10" y="16.500" text-anchor="middle" font-family="'Liberation Sans',sans-serif" font-weight="bold" font-size="17" fill="#dd5a1c">P</text><polygon points="12,14.500 24,12 24.500,21 13.500,23.500" fill="#fff" stroke="#e58a5e" stroke-width=".8"/><ellipse cx="18.500" cy="17.500" rx="3.600" ry="2.600" fill="#e8753f" transform="rotate(-12 18.500 17.500)"/><ellipse cx="18.500" cy="17.500" rx="1.500" ry="1" fill="#fbe0d0" transform="rotate(-12 18.500 17.500)"/></svg>
<!-- zoom -->
<svg class="abs" style="left:940px;top:3.800px" width="27" height="25.200" viewBox="0 0 27 25.200"><rect width="27" height="25.200" rx="8.500" fill="#4a8cf7"/><rect x="5" y="8.200" width="11.400" height="8.800" rx="2.200" fill="#fff"/><path d="M17.200 11.300l4.300-2.800v8.200l-4.300-2.800z" fill="#fff"/></svg>
<!-- tray -->
<div class="abs" style="left:1359.500px;top:9.300px;font-size:9.600px;line-height:12px;color:#f4f4f4">RU</div>
<svg class="abs" style="left:1385.500px;top:11px" width="13" height="13" viewBox="0 0 13 13"><rect width="13" height="13" rx="4" fill="#4a8cf7"/><rect x="2.600" y="4.300" width="5.400" height="4.400" rx="1" fill="#fff"/><path d="M8.400 5.900l2.100-1.400v4l-2.100-1.400z" fill="#fff"/></svg>
<svg class="abs" style="left:1405px;top:10.500px" width="15" height="15" viewBox="0 0 15 15"><circle cx="6.500" cy="6.500" r="6.500" fill="#2fa4de"/><rect x="5" y="6" width="9.500" height="8" rx="1.200" fill="#e23b3b"/><text x="9.800" y="12.600" text-anchor="middle" font-family="'Liberation Sans',sans-serif" font-weight="bold" font-size="6.500" fill="#fff">.7</text></svg>
<svg class="abs" style="left:1425px;top:10.500px" width="14" height="14" viewBox="0 0 25 25"><circle cx="12.500" cy="12.500" r="12.500" fill="#15233f"/><circle cx="16.500" cy="9.500" r="4" fill="none" stroke="#fff" stroke-width="2"/><circle cx="16.500" cy="9.500" r="1.800" fill="#fff"/><path d="M0 13l8.500 3.500l5-4l3 2.500l-5.500 4.500a3.200 3.200 0 0 1-6-.5l-5-2z" fill="#fff"/></svg>
<svg class="abs" style="left:1444.800px;top:11px" width="13.500" height="12.200" viewBox="0 0 13.500 12.200"><rect width="13.500" height="12.200" fill="#0f120c"/><path d="M3 6.200q3.500-4 8-1.500v4q-4.500 2.500-8-2.500zm2.500 0q2 2 3.500.500v-1.500q-1.500-1-3.500 1z" fill="#76b82a" fill-rule="evenodd"/></svg>
<svg class="abs" style="left:1464px;top:9.500px" width="16" height="16" viewBox="0 0 16 16"><rect x="2" y="1" width="1.300" height="13" fill="#555"/><path d="M3.300 2q3-1.500 5 0t4 0v6q-2 1.500-4 0t-5 0z" fill="#f4f4f4" stroke="#8a8a8a" stroke-width=".5"/><circle cx="10.500" cy="11" r="4.300" fill="#e2352f"/><path d="M8.700 9.200l3.600 3.600M12.300 9.200l-3.600 3.600" stroke="#fff" stroke-width="1.400"/></svg>
<svg class="abs" style="left:1484px;top:9.500px" width="17" height="16" viewBox="0 0 17 16"><rect x="1" y="2" width="5" height="8" fill="#e8e8e8" stroke="#555" stroke-width=".7"/><rect x="5" y="5" width="10" height="7" fill="#dfe6ee" stroke="#555" stroke-width=".8"/><rect x="3" y="13" width="9" height="1.500" fill="#555"/><path d="M9 8l6 6M15 8l-6 6" stroke="#e0202a" stroke-width="2"/></svg>
<svg class="abs" style="left:1504px;top:9.500px" width="16" height="16" viewBox="0 0 16 16"><path d="M1.500 5.500h3l4-3.500v12l-4-3.500h-3z" fill="#f2f2f2" stroke="#8a8a8a" stroke-width=".5"/><path d="M10.300 5.200q1.600 2.800 0 5.600M12.300 3.600q2.600 4.400 0 8.800" fill="none" stroke="#f2f2f2" stroke-width="1.100"/></svg>
<div class="abs" style="left:1525px;top:3px;width:61px;text-align:center;font-size:10.500px;line-height:14px;color:#fff;transform:scaleX(.89)">8:56<br>23.11.2021</div>
<div class="abs" style="left:1588px;top:0;width:12px;height:33px;background:linear-gradient(90deg,#c9d6e6 0,#5b6b80 1.500px,#6f8098 50%,#4f5f74 100%);border-left:1px solid #3f4d60"></div>
</div>

</body>
</html>
